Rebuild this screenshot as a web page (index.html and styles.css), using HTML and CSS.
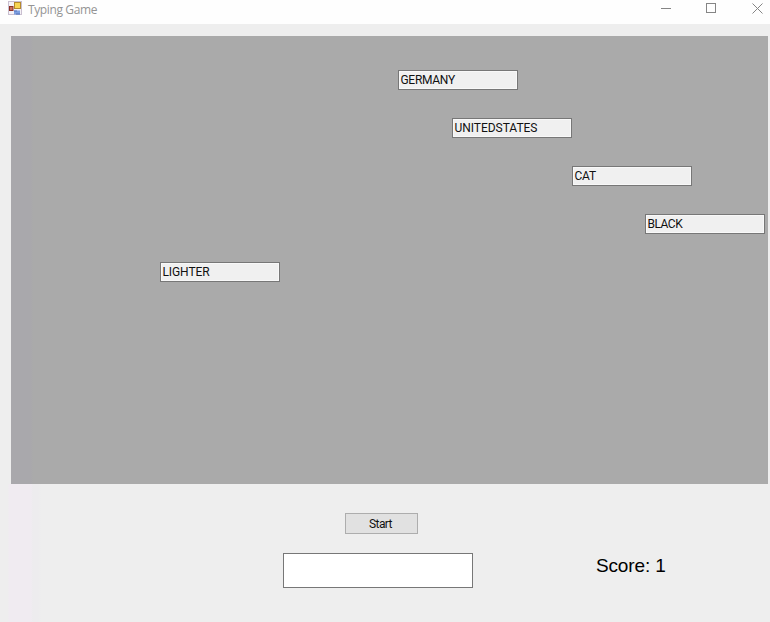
FILE: index.html
```html
<!DOCTYPE html>
<html lang="en">
<head>
<meta charset="utf-8">
<title>Typing Game</title>
<link rel="stylesheet" href="styles.css">
</head>
<body>
<div class="window">
  <header class="titlebar">
    <svg class="app-icon" width="14" height="14" viewBox="0 0 14 14">
      <rect x=".5" y=".5" width="13" height="13" fill="#f4f1f6" stroke="#c9bfd0"/>
      <rect x="6.5" y="1.5" width="6" height="6" fill="#f7d552" stroke="#b58a2c"/>
      <rect x="1.5" y="5.5" width="3.5" height="4" fill="#c9705c" stroke="#8c2f26"/>
      <rect x="6" y="9.5" width="6" height="4" fill="#7d9fe0"/>
      <path d="M6 10h3M8 13h4" stroke="#5672b8"/>
    </svg>
    <h1 class="title">Typing Game</h1>
    <div class="controls">
      <svg width="11" height="11" viewBox="0 0 11 11"><path d="M0 6.5h10"/></svg>
      <svg width="11" height="11" viewBox="0 0 11 11"><rect x=".5" y=".5" width="9" height="9"/></svg>
      <svg width="11" height="11" viewBox="0 0 11 11"><path d="M.5.5l10 10M10.5.5l-10 10"/></svg>
    </div>
  </header>
  <main class="client">
    <section class="board">
      <div class="word germany">GERMANY</div>
      <div class="word unitedstates">UNITEDSTATES</div>
      <div class="word cat">CAT</div>
      <div class="word black">BLACK</div>
      <div class="word lighter">LIGHTER</div>
    </section>
    <section class="panel">
      <button class="start">Start</button>
      <input class="answer" type="text" aria-label="Answer">
      <p class="score">Score: 1</p>
    </section>
  </main>
</div>
</body>
</html>
```

FILE: styles.css
```css
* { box-sizing: border-box; }
body { margin: 0; background: #eee; font-family: Roboto, "Liberation Sans", sans-serif; color: #111; }
.window { height: 622px; display: flex; flex-direction: column; overflow: hidden; }
.titlebar { height: 24px; flex: none; display: flex; align-items: flex-start; background: #fefefe; padding: 1px 7px 0 8px; }
.app-icon { flex: none; }
.title { margin: 0 0 0 6px; font: 12px/17px "Open Sans", "Noto Sans", sans-serif; letter-spacing: -.38px; color: #949494; }
.controls { margin-left: auto; display: flex; gap: 34px; padding-top: 2px; fill: none; stroke: #858585; }
.controls svg { display: block; }
.controls svg:first-child { margin-top: -1px; }
.controls svg:last-child { margin-left: 1px; }
.client { flex: 1; display: flex; flex-direction: column; padding: 12px 2px 0 11px; background: linear-gradient(90deg, transparent 8px, #f0ebf1 9px 31px, #edecee 33px 38px, transparent 41px) 0 460px / 100% 138px no-repeat; }
.board { position: relative; height: 448px; flex: none; background: linear-gradient(90deg, #a9a8ac 20px, #aaa 22px); }
.word { position: absolute; width: 120px; height: 20px; border: 1px solid #777; background: #f0f0f0; box-shadow: inset 0 0 0 1px #f8f8f8; padding-left: 1.5px; font-size: 12px; line-height: 18px; white-space: nowrap; }
.germany { left: 387px; top: 34px; letter-spacing: -.3px; }
.unitedstates { left: 441px; top: 82px; letter-spacing: -.03px; }
.cat { left: 561px; top: 130px; letter-spacing: -.2px; }
.black { left: 634px; top: 178px; letter-spacing: -.5px; }
.lighter { left: 149px; top: 226px; letter-spacing: -.1px; }
.panel { display: grid; grid-template-columns: 62px 128px 123px 1fr; grid-template-rows: 21px 35px; row-gap: 19px; padding: 29px 0 0 272px; }
.start { grid-column: 2; width: 73px; height: 21px; border: 1px solid #adadad; background: #e1e1e1; padding: 1px 2px 0 0; font: 12px/18px Roboto, sans-serif; letter-spacing: -.6px; color: #111; }
.answer { grid-column: 1 / 3; grid-row: 2; width: 190px; height: 35px; border: 1px solid #777; background: #fff; padding: 4px; font-size: 18px; outline: none; }
.score { grid-column: 4; grid-row: 2; margin: 1px 0 0; font-family: "Liberation Sans", sans-serif; font-size: 19px; line-height: 24px; letter-spacing: -.15px; white-space: nowrap; color: #000; }
```
